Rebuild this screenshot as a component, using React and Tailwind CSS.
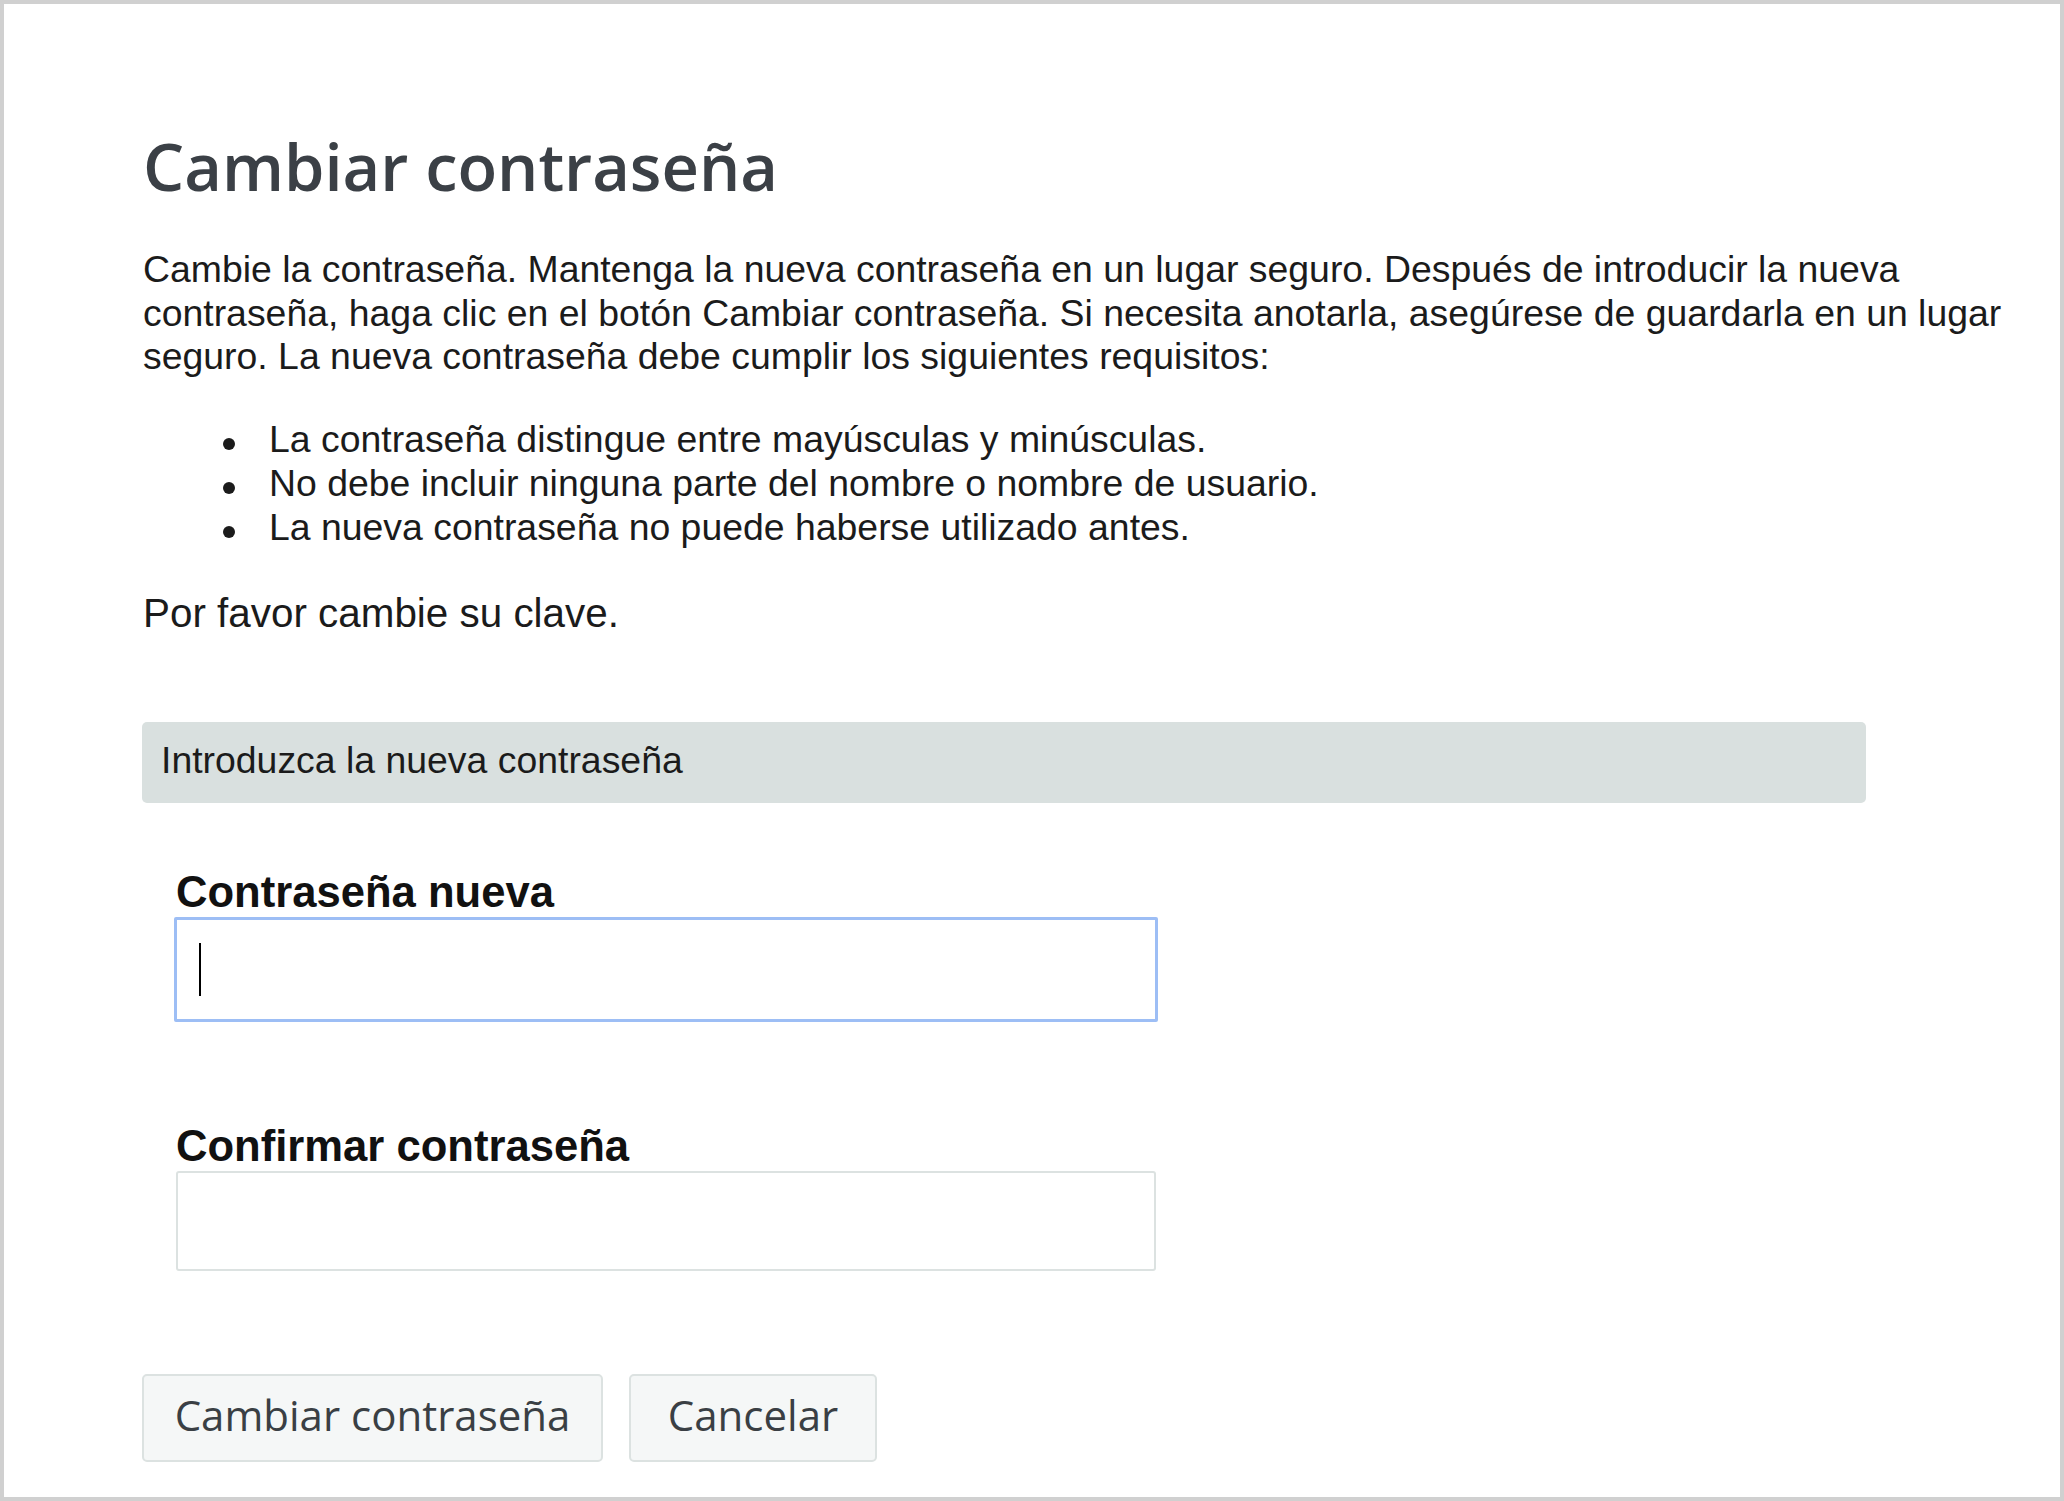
export default function App() {
  const requisitos = [
    'La contraseña distingue entre mayúsculas y minúsculas.',
    'No debe incluir ninguna parte del nombre o nombre de usuario.',
    'La nueva contraseña no puede haberse utilizado antes.',
  ];

  return (
    <div className="w-[2064px] h-[1501px] bg-white border-4 border-[#d0d0d0] pl-[139px] pt-[130px] font-['Liberation_Sans',Arial,sans-serif] text-[#1b1b1b]">
      <h1 className="font-['Open_Sans',sans-serif] font-semibold text-[65px] leading-none text-[#3b4046]">
        Cambiar contraseña
      </h1>

      <p className="mt-[49px] text-[37.4px] leading-[43.5px] whitespace-nowrap">
        Cambie la contraseña. Mantenga la nueva contraseña en un lugar seguro. Después de introducir la nueva
        <br />
        contraseña, haga clic en el botón Cambiar contraseña. Si necesita anotarla, asegúrese de guardarla en un lugar
        <br />
        seguro. La nueva contraseña debe cumplir los siguientes requisitos:
      </p>

      <ul className="mt-[38px] text-[37.4px] leading-[44px]">
        {requisitos.map((r) => (
          <li key={r} className="flex items-start whitespace-nowrap">
            <span className="ml-[80px] mt-[21px] w-[12px] h-[12px] rounded-full bg-[#1b1b1b] shrink-0" />
            <span className="ml-[34px]">{r}</span>
          </li>
        ))}
      </ul>

      <p className="mt-[41px] text-[40.4px] leading-[46px]">Por favor cambie su clave.</p>

      <div className="mt-[86px] -ml-[1px] w-[1724px] h-[81px] rounded-[5px] bg-[#d9e0df] pl-[19px] pt-[17px] text-[37.4px] leading-[43.5px]">
        Introduzca la nueva contraseña
      </div>

      <div className="pl-[33px]">
        <label className="block mt-[65px] font-bold text-[43.6px] leading-[49px] text-[#111]">
          Contraseña nueva
        </label>
        <div className="-ml-[2px] w-[984px] h-[105px] border-[3px] border-[#9dbef5] rounded-[2px] bg-white flex items-center pl-[22px]">
          <div className="w-[2px] h-[53px] bg-black" />
        </div>

        <label className="block mt-[100px] font-bold text-[43.6px] leading-[49px] text-[#111]">
          Confirmar contraseña
        </label>
        <div className="w-[980px] h-[100px] border-2 border-[#dce2e1] rounded-[3px] bg-white" />
      </div>

      <div className="mt-[103px] -ml-[1px] flex gap-[26px] font-['Open_Sans',sans-serif] text-[42px] text-[#3a3f44]">
        <button className="w-[461px] h-[88px] border-2 border-[#dce2e1] rounded-[5px] bg-[#f5f7f7] leading-none pb-[5px] flex items-center justify-center">
          Cambiar contraseña
        </button>
        <button className="w-[248px] h-[88px] border-2 border-[#dce2e1] rounded-[5px] bg-[#f5f7f7] leading-none pb-[5px] flex items-center justify-center">
          Cancelar
        </button>
      </div>
    </div>
  );
}
